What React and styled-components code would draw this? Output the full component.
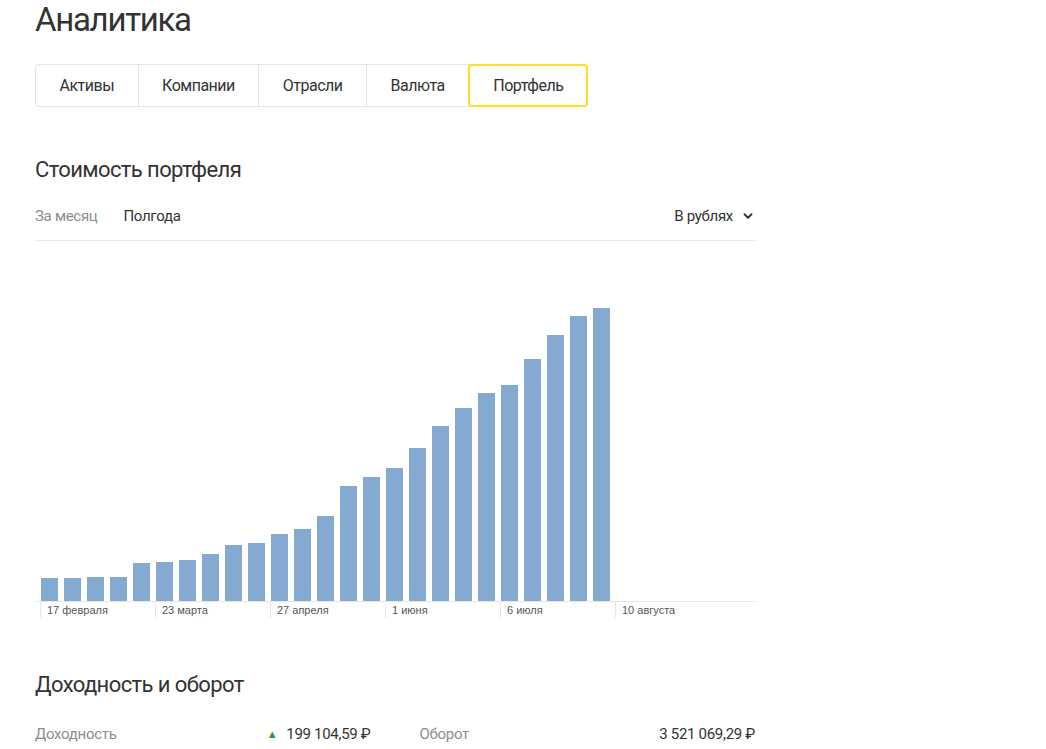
import React from "react";
import styled, { createGlobalStyle } from "styled-components";
import { ChevronDown } from "lucide-react";

const GlobalStyle = createGlobalStyle`
  html, body {
    margin: 0;
    padding: 0;
    background: #fff;
  }
  body {
    font-family: Roboto, "Noto Sans", sans-serif;
    color: #333;
  }
`;

const Page = styled.div`
  padding: 0 0 0 35px;
  width: 720px;
`;

const Title = styled.h1`
  margin: 0;
  font-size: 33px;
  line-height: 40px;
  font-weight: 400;
  color: #333;
  letter-spacing: -1.3px;
`;

const Tabs = styled.div`
  display: inline-flex;
  margin-top: 24px;
  border: 1px solid #e5e5e5;
  border-radius: 4px;
  height: 41px;
`;

const Tab = styled.div`
  display: flex;
  align-items: center;
  padding: 0 23.5px;
  font-size: 16px;
  letter-spacing: -0.5px;
  color: #333;
  border-left: 1px solid #e5e5e5;
  &:first-child {
    border-left: none;
  }
  ${(p) =>
    p.$active &&
    `
    margin: -1px -1px -1px 0;
    border: 2px solid #ffdd2d;
    border-radius: 4px;
    padding: 0 23px;
  `}
`;

const SectionTitle = styled.h2`
  margin: ${(p) => p.$top}px 0 0;
  font-size: 22px;
  line-height: 28px;
  font-weight: 400;
  letter-spacing: -0.6px;
  color: #333;
`;

const FilterRow = styled.div`
  display: flex;
  justify-content: space-between;
  align-items: center;
  margin-top: 20px;
  padding-bottom: 12px;
  border-bottom: 1px solid #e7e7e7;
  font-size: 15px;
  line-height: 24px;
  letter-spacing: -0.3px;
`;

const Periods = styled.div`
  display: flex;
  gap: 26px;
`;

const Period = styled.span`
  color: ${(p) => (p.$active ? "#333" : "#8d8d8d")};
`;

const Currency = styled.div`
  display: flex;
  align-items: center;
  gap: 8px;
  color: #333;
`;

const Chart = styled.div`
  display: flex;
  align-items: flex-end;
  gap: 6px;
  height: 360px;
  padding-left: 6px;
  border-bottom: 1px solid #e7e7e7;
`;

const Bar = styled.div`
  width: 17px;
  flex: none;
  background: #84aad1;
`;

const Axis = styled.div`
  display: flex;
  padding-left: 5px;
`;

const Tick = styled.div`
  width: 115px;
  flex: none;
  height: 16px;
  border-left: 1px solid #e7e7e7;
  padding-left: 6px;
  box-sizing: border-box;
  font-family: "Liberation Sans", Arial, sans-serif;
  font-size: 11px;
  line-height: 16px;
  color: #555;
`;

const Stats = styled.div`
  display: grid;
  grid-template-columns: 1fr 1fr;
  column-gap: 49px;
  margin-top: 23px;
  font-size: 15px;
  line-height: 24px;
  letter-spacing: -0.3px;
`;

const Stat = styled.div`
  display: flex;
  justify-content: space-between;
  align-items: center;
`;

const Label = styled.span`
  color: #8d8d8d;
`;

const Value = styled.span`
  display: flex;
  align-items: center;
  gap: 9px;
  color: #333;
`;

const Up = styled.span`
  color: #21a038;
  font-size: 11px;
  line-height: 1;
`;

const heights = [
  23, 23, 24, 24, 38, 39, 41, 47, 56, 58, 67, 72, 85, 115, 124, 133, 153, 175,
  193, 208, 216, 242, 266, 285, 293,
];

const ticks = [
  "17 февраля",
  "23 марта",
  "27 апреля",
  "1 июня",
  "6 июля",
  "10 августа",
];

const tabs = ["Активы", "Компании", "Отрасли", "Валюта", "Портфель"];

export default function App() {
  return (
    <>
      <GlobalStyle />
      <Page>
        <Title>Аналитика</Title>
        <Tabs>
          {tabs.map((t) => (
            <Tab key={t} $active={t === "Портфель"}>
              {t}
            </Tab>
          ))}
        </Tabs>

        <SectionTitle $top={49}>Стоимость портфеля</SectionTitle>
        <FilterRow>
          <Periods>
            <Period>За месяц</Period>
            <Period $active>Полгода</Period>
          </Periods>
          <Currency>
            В рублях
            <ChevronDown size={14} strokeWidth={3.2} />
          </Currency>
        </FilterRow>
        <Chart>
          {heights.map((h, i) => (
            <Bar key={i} style={{ height: h }} />
          ))}
        </Chart>
        <Axis>
          {ticks.map((t) => (
            <Tick key={t}>{t}</Tick>
          ))}
        </Axis>

        <SectionTitle $top={53}>Доходность и оборот</SectionTitle>
        <Stats>
          <Stat>
            <Label>Доходность</Label>
            <Value>
              <Up>▲</Up>199 104,59 ₽
            </Value>
          </Stat>
          <Stat>
            <Label>Оборот</Label>
            <Value>3 521 069,29 ₽</Value>
          </Stat>
        </Stats>
      </Page>
    </>
  );
}
